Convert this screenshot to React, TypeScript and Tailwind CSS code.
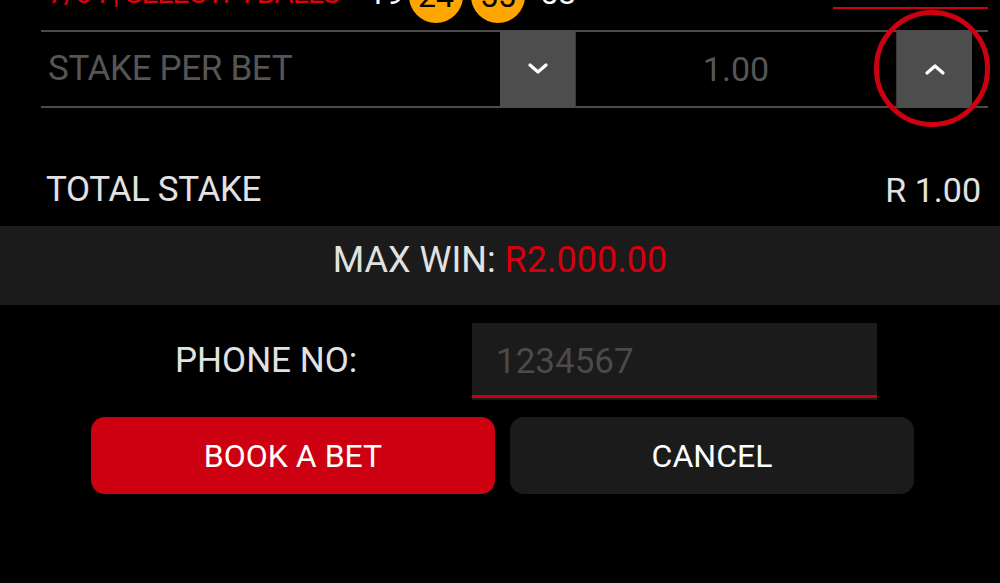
import React from "react";

const Chevron = ({ up }: { up?: boolean }) => (
  <svg width="22" height="14" viewBox="0 0 22 14" fill="none">
    <path
      d={up ? "M3 11 L11 4 L19 11" : "M3 3 L11 10 L19 3"}
      stroke="white"
      strokeWidth="3.2"
      strokeLinecap="round"
      strokeLinejoin="round"
    />
  </svg>
);

export default function App() {
  return (
    <div
      className="w-[1000px] h-[583px] bg-black overflow-hidden relative text-[#e2e2e2]"
      style={{ fontFamily: "Roboto, 'Noto Sans', sans-serif" }}
    >
      {/* partially visible top row */}
      <div className="flex items-center h-[60px] -mt-[34px]">
        <div className="ml-[48px] mb-[6px] w-[320px] text-[30px] leading-none text-[#e0000f] tracking-[-0.04em] whitespace-nowrap">
          7/64 | SELECT: 4 BALLS
        </div>
        <div className="flex items-center text-[32px] leading-none">
          <span className="w-[41px] mb-[6px] text-white">19</span>
          <span className="w-[54px] h-[54px] rounded-full bg-[#ffa500] text-black flex items-center justify-center">
            24
          </span>
          <span className="w-[54px] h-[54px] rounded-full bg-[#ffa500] text-black flex items-center justify-center ml-[8px]">
            55
          </span>
          <span className="ml-[15px] mb-[6px] text-white">58</span>
        </div>
        <div className="ml-auto mr-[12px] self-start mt-[41px] w-[155px] h-[2px] bg-[#d0000c]" />
      </div>

      {/* stake per bet row */}
      <div className="mt-[4px] ml-[41px] mr-[12px] h-[78px] flex">
        <div className="w-[459px] border-y-2 border-[#4b4b4b] flex items-center pl-[7px] text-[35px] text-[#555555] tracking-[-0.01em]">
          STAKE PER BET
        </div>
        <div className="w-[75px] bg-[#4d4d4d] flex items-center justify-center">
          <Chevron />
        </div>
        <div className="w-[322px] border-y-2 border-x border-[#3a3a3a] border-y-[#4b4b4b] flex items-center justify-center text-[34px] text-[#555555]">
          1.00
        </div>
        <div className="w-[75px] bg-[#4d4d4d] flex items-center justify-center">
          <Chevron up />
        </div>
        <div className="flex-1 border-y-2 border-[#4b4b4b]" />
      </div>

      {/* highlight circle */}
      <div className="absolute left-[874px] top-[10px] w-[116px] h-[117px] rounded-full border-[5px] border-[#cc0010]" />

      {/* total stake */}
      <div className="flex justify-between items-center pt-[62px] pb-[16px] pl-[46px] pr-[19px] h-[118px] text-[35px] leading-[40px]">
        <span className="tracking-[-0.01em]">TOTAL STAKE</span>
        <span className="text-[34px]">R 1.00</span>
      </div>

      {/* max win */}
      <div className="h-[79px] bg-[#1b1b1b] flex items-center justify-center pb-[12px] text-[36px]">
        <span className="text-[#e2e2e2]">MAX WIN:&nbsp;</span>
        <span className="text-[#d4000f]">R2.000.00</span>
      </div>

      {/* phone no */}
      <div className="flex mt-[18px] pl-[175px]">
        <div className="w-[297px] h-[72px] flex items-center pt-[5px] text-[35px]">PHONE NO:</div>
        <div className="w-[405px] flex flex-col">
          <div className="h-[72px] bg-[#1b1b1b] flex items-center pl-[24px] pt-[7px] text-[35px] text-[#4a4a4a]">
            1234567
          </div>
          <div className="h-[3px] bg-[#cc0010]" />
          <div className="h-[2px] bg-[#1b1b1b]" />
        </div>
      </div>

      {/* buttons */}
      <div className="flex gap-[15px] pl-[91px] mt-[17px]">
        <div className="w-[404px] h-[77px] rounded-[14px] bg-[#cc0010] flex items-center justify-center text-[32px] text-white">
          BOOK A BET
        </div>
        <div className="w-[404px] h-[77px] rounded-[14px] bg-[#1b1b1b] flex items-center justify-center text-[32px] text-white">
          CANCEL
        </div>
      </div>
    </div>
  );
}
